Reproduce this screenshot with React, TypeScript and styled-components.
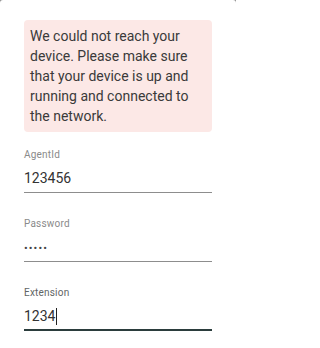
import React from "react";
import styled, { createGlobalStyle } from "styled-components";

const Global = createGlobalStyle`
  html, body {
    margin: 0;
    padding: 0;
    background: #ffffff;
  }
  body {
    font-family: Roboto, "Noto Sans", Arial, sans-serif;
  }
`;

const Frame = styled.div`
  width: 236px;
  height: 348px;
  background: #8f8f8f;
`;

const Panel = styled.div`
  box-sizing: border-box;
  width: 236px;
  height: 348px;
  background: #ffffff;
  border-radius: 3px 3px 0 0;
  padding: 20px 24px 0 24px;
  display: flex;
  flex-direction: column;
`;

const Alert = styled.div`
  background: #fce8e6;
  border-radius: 4px;
  padding: 6px 6px;
  font-size: 14px;
  line-height: 20px;
  color: #3a3a3a;
  margin-bottom: 17px;
`;

const Fields = styled.div`
  display: flex;
  flex-direction: column;
  gap: 25px;
`;

const Field = styled.div<{ $focused?: boolean }>`
  display: flex;
  flex-direction: column;
  border-bottom: ${(p) => (p.$focused ? "2px solid #2b3d3d" : "1px solid #8d8d8d")};
  padding-bottom: ${(p) => (p.$focused ? "3px" : "4px")};
`;

const Label = styled.div<{ $focused?: boolean }>`
  font-size: 10px;
  line-height: 12px;
  color: ${(p) => (p.$focused ? "#5f6565" : "#8a8a8a")};
  margin-bottom: 7px;
  letter-spacing: 0.2px;
`;

const Value = styled.div`
  font-size: 14px;
  line-height: 20px;
  height: 20px;
  color: #333333;
  display: flex;
  align-items: center;
`;

const Dots = styled.span`
  font-size: 11px;
  letter-spacing: 1.1px;
  color: #444;
  line-height: 10px;
  margin-top: 3px;
`;

const Caret = styled.span`
  display: inline-block;
  width: 1px;
  height: 17px;
  background: #222;
  margin-left: 0.5px;
`;

export default function App() {
  return (
    <>
      <Global />
      <Frame>
        <Panel>
          <Alert>
            We could not reach your device. Please make sure that your device is up and running and
            connected to the network.
          </Alert>
          <Fields>
            <Field>
              <Label>AgentId</Label>
              <Value>123456</Value>
            </Field>
            <Field>
              <Label>Password</Label>
              <Value>
                <Dots>•••••</Dots>
              </Value>
            </Field>
            <Field $focused>
              <Label $focused>Extension</Label>
              <Value>
                1234
                <Caret />
              </Value>
            </Field>
          </Fields>
        </Panel>
      </Frame>
    </>
  );
}
